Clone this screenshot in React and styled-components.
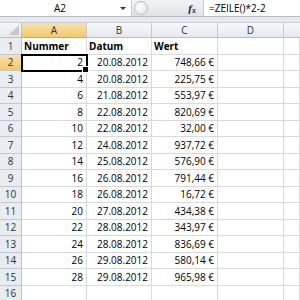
import React from 'react'
import styled, { createGlobalStyle } from 'styled-components'

const rows = [
    ['2', '20.08.2012', '748,66 €'],
    ['4', '20.08.2012', '225,75 €'],
    ['6', '21.08.2012', '553,97 €'],
    ['8', '22.08.2012', '820,69 €'],
    ['10', '22.08.2012', '32,00 €'],
    ['12', '24.08.2012', '937,72 €'],
    ['14', '25.08.2012', '576,90 €'],
    ['16', '26.08.2012', '791,44 €'],
    ['18', '26.08.2012', '16,72 €'],
    ['20', '27.08.2012', '434,38 €'],
    ['22', '28.08.2012', '343,97 €'],
    ['24', '28.08.2012', '836,69 €'],
    ['26', '29.08.2012', '580,14 €'],
    ['28', '29.08.2012', '965,98 €'],
]

const columns = ['A', 'B', 'C', 'D', '']

export default function App() {
    return (
        <Page>
            <Global />
            <FormulaBar>
                <NameBox>
                    <NameText>A2</NameText>
                    <Arrow />
                </NameBox>
                <Middle>
                    <Handle />
                    <Fx>f<sub>x</sub></Fx>
                </Middle>
                <Formula>=ZEILE()*2-2</Formula>
            </FormulaBar>
            <Strip />
            <Sheet>
                <Corner><CornerMark /></Corner>
                {columns.map((c, i) => (
                    <ColHead key={i} active={c === 'A'} last={i === columns.length - 1}>{c}</ColHead>
                ))}

                <RowHead>1</RowHead>
                <Cell bold>Nummer</Cell>
                <Cell bold>Datum</Cell>
                <Cell bold>Wert</Cell>
                <Cell />
                <Cell />

                {rows.map((r, i) => (
                    <React.Fragment key={i}>
                        <RowHead active={i === 0}>{i + 2}</RowHead>
                        <Cell right selected={i === 0}>
                            {r[0]}
                            {i === 0 && <FillHandle />}
                        </Cell>
                        <Cell right>{r[1]}</Cell>
                        <Cell right>{r[2]}</Cell>
                        <Cell />
                        <Cell />
                    </React.Fragment>
                ))}

                <RowHead>16</RowHead>
                <Cell />
                <Cell />
                <Cell />
                <Cell />
                <Cell />
            </Sheet>
        </Page>
    )
}

const Global = createGlobalStyle`
    html, body {
        margin: 0;
        padding: 0;
        background: #ffffff;
    }
`

const Page = styled.div`
    width: 300px;
    height: 300px;
    overflow: hidden;
    font-family: "Open Sans", "Liberation Sans", sans-serif;
    background: #ffffff;
`

const FormulaBar = styled.div`
    display: flex;
    height: 16px;
    border-bottom: 1px solid #b6bcc6;
    background: #ffffff;
`

const NameBox = styled.div`
    width: 131px;
    display: flex;
    align-items: center;
    border-right: 1px solid #c7ccd3;
`

const NameText = styled.div`
    flex: 1;
    text-align: center;
    font-size: 10px;
    color: #000;
`

const Arrow = styled.div`
    width: 0;
    height: 0;
    margin-right: 5px;
    border-left: 3px solid transparent;
    border-right: 3px solid transparent;
    border-top: 3px solid #333;
`

const Middle = styled.div`
    width: 71px;
    display: flex;
    align-items: center;
    justify-content: space-between;
    background: linear-gradient(#f2f4f7, #dfe3e9);
    border-right: 1px solid #c7ccd3;
`

const Handle = styled.div`
    width: 12px;
    height: 12px;
    margin-left: 2px;
    border-radius: 50%;
    border: 1px solid #b9bec6;
    background: radial-gradient(circle at 40% 40%, #ffffff, #dde1e6);
`

const Fx = styled.div`
    font-family: "Liberation Serif", serif;
    font-style: italic;
    font-weight: bold;
    font-size: 11px;
    color: #222;
    margin-right: 7px;
    sub {
        font-size: 8px;
        vertical-align: -1px;
    }
`

const Formula = styled.div`
    flex: 1;
    display: flex;
    align-items: center;
    padding-left: 5px;
    font-size: 10px;
    color: #000;
`

const Strip = styled.div`
    height: 5px;
    background: #e6e9ee;
    border-bottom: 1px solid #c9ced6;
`

const Sheet = styled.div`
    display: grid;
    grid-template-columns: 22px 65px 65px 66px 66px 1fr;
    grid-template-rows: 15px repeat(16, 16.5px);
    font-size: 10px;
`

const headBase = `
    display: flex;
    align-items: center;
    justify-content: center;
    color: #2b3340;
    font-size: 10px;
    box-sizing: border-box;
`

const Corner = styled.div`
    ${headBase}
    position: relative;
    background: linear-gradient(#f5f6f8, #e4e8ee);
    border-right: 1px solid #b8c0cb;
    border-bottom: 1px solid #b8c0cb;
`

const CornerMark = styled.div`
    position: absolute;
    right: 2px;
    bottom: 2px;
    width: 0;
    height: 0;
    border-left: 10px solid transparent;
    border-bottom: 10px solid #c5cad2;
`

const ColHead = styled.div`
    ${headBase}
    background: ${p => p.active
        ? 'linear-gradient(#fae1a9, #f3c86d)'
        : 'linear-gradient(#f7f8fa, #e5e9ef)'};
    border-right: ${p => p.last ? 'none' : '1px solid #c3c9d2'};
    border-bottom: 1px solid ${p => p.active ? '#e4a33c' : '#b8c0cb'};
`

const RowHead = styled.div`
    ${headBase}
    background: ${p => p.active
        ? 'linear-gradient(#fae1a9, #f3c86d)'
        : '#e9ecf1'};
    border-right: 1px solid ${p => p.active ? '#e4a33c' : '#b8c0cb'};
    border-bottom: 1px solid #c3c9d2;
`

const Cell = styled.div`
    position: relative;
    box-sizing: border-box;
    display: flex;
    align-items: center;
    justify-content: ${p => p.right ? 'flex-end' : 'flex-start'};
    padding: 0 3px 0 2px;
    border-right: 1px solid #d8dadd;
    border-bottom: 1px solid #d8dadd;
    font-weight: ${p => p.bold ? 'bold' : 'normal'};
    color: #000;
    white-space: nowrap;
    ${p => p.selected && `
        outline: 2px solid #000;
        outline-offset: -1px;
        z-index: 1;
    `}
`

const FillHandle = styled.div`
    position: absolute;
    right: -3px;
    bottom: -3px;
    width: 5px;
    height: 5px;
    background: #000;
    border: 1px solid #fff;
`
